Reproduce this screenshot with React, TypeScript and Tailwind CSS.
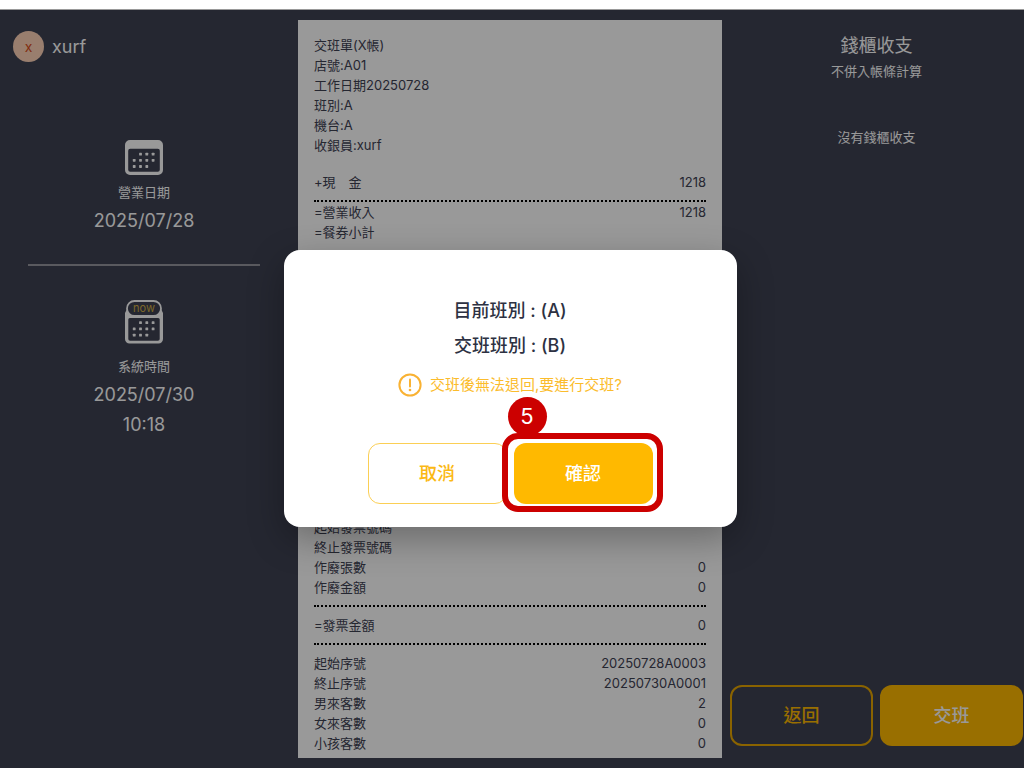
import type { ReactNode } from 'react';

interface ReceiptRow {
  label: string;
  value?: string;
}

const headerLines = [
  '交班單(X帳)',
  '店號:A01',
  '工作日期20250728',
  '班別:A',
  '機台:A',
  '收銀員:xurf'
];

const incomeRows: ReceiptRow[] = [
  { label: '=營業收入', value: '1218' },
  { label: '=餐券小計' }
];

const invoiceRows: ReceiptRow[] = [
  { label: '起始發票號碼' },
  { label: '終止發票號碼' },
  { label: '作廢張數', value: '0' },
  { label: '作廢金額', value: '0' }
];

const guestRows: ReceiptRow[] = [
  { label: '起始序號', value: '20250728A0003' },
  { label: '終止序號', value: '20250730A0001' },
  { label: '男來客數', value: '2' },
  { label: '女來客數', value: '0' },
  { label: '小孩客數', value: '0' }
];

function Rows({ rows }: { rows: ReceiptRow[] }) {
  return (
    <dl>
      {rows.map((row) => (
        <div key={row.label} className="flex justify-between whitespace-pre">
          <dt>{row.label}</dt>
          <dd>{row.value}</dd>
        </div>
      ))}
    </dl>
  );
}

function DottedLine({ className = '' }: { className?: string }) {
  return <hr className={`border-t-2 border-dotted border-black ${className}`} />;
}

function CalendarDots({ top }: { top: number }) {
  const dots = [
    [1, 0], [2, 0], [3, 0],
    [0, 1], [1, 1], [2, 1], [3, 1],
    [0, 2], [1, 2], [2, 2]
  ];
  return (
    <>
      {dots.map(([col, row]) => (
        <rect
          key={`${col}-${row}`}
          x={7.8 + col * 6.3}
          y={top + row * 6.2}
          width="2.8"
          height="2.8"
          rx="0.6"
          fill="white"
        />
      ))}
    </>
  );
}

function CalendarIcon() {
  return (
    <svg width="38" height="35" viewBox="0 0 38 35" aria-hidden="true">
      <path
        fill="white"
        fillRule="evenodd"
        d="M5 0H33a5 5 0 0 1 5 5V30a5 5 0 0 1-5 5H5a5 5 0 0 1-5-5V5a5 5 0 0 1 5-5ZM5.2 8.8a2 2 0 0 0-2 2V29.8a2 2 0 0 0 2 2H32.8a2 2 0 0 0 2-2V10.8a2 2 0 0 0-2-2Z"
      />
      <CalendarDots top={12.7} />
    </svg>
  );
}

function NowIcon() {
  return (
    <svg width="38" height="44" viewBox="0 0 38 44" aria-hidden="true">
      <path
        fill="white"
        fillRule="evenodd"
        d="M2 9H36L38 13V39a4.5 4.5 0 0 1-4.5 4.5H4.5a4.5 4.5 0 0 1-4.5-4.5V13ZM4.8 18a1.5 1.5 0 0 0-1.5 1.5V39a1.8 1.8 0 0 0 1.8 1.8H32.9a1.8 1.8 0 0 0 1.8-1.8V19.5a1.5 1.5 0 0 0-1.5-1.5Z"
      />
      <rect x="2" y="1" width="34" height="15" rx="7.5" fill="#3e4153" stroke="white" strokeWidth="1.8" />
      <text x="19" y="12" textAnchor="middle" fill="#cfae45" className="text-[11px]">
        now
      </text>
      <CalendarDots top={21.3} />
    </svg>
  );
}

interface InfoBlockProps {
  icon: ReactNode;
  label: string;
  children: ReactNode;
  className?: string;
}

function InfoBlock({ icon, label, children, className = '' }: InfoBlockProps) {
  return (
    <div className={`flex flex-col items-center ${className}`}>
      {icon}
      <div className="text-center">
        <p className="mb-1 text-[13px] leading-5">{label}</p>
        <div className="text-lg leading-[30px]">{children}</div>
      </div>
    </div>
  );
}

function ConfirmDialog() {
  return (
    <div
      role="dialog"
      aria-modal="true"
      aria-labelledby="shift-title"
      className="flex w-[453px] flex-col items-center rounded-2xl bg-white pt-[43px] pb-[23px] shadow-[0_12px_36px_rgba(0,0,0,0.3)]"
    >
      <h2 id="shift-title" className="text-center text-lg leading-[35px] font-medium text-[#2d3142]">
        目前班別 : (A)
        <br />
        交班班別 : (B)
      </h2>
      <p className="mt-2.5 flex items-center gap-2 text-[15px] leading-6 text-[#fbbc2c]">
        <svg width="24" height="24" viewBox="0 0 24 24" fill="none" aria-hidden="true">
          <circle cx="12" cy="12" r="10.6" stroke="#f9b233" strokeWidth="2" />
          <path d="M12 6.5V13.5" stroke="#f9b233" strokeWidth="2" strokeLinecap="round" />
          <circle cx="12" cy="17" r="1.3" fill="#f9b233" />
        </svg>
        交班後無法退回,要進行交班?
      </p>
      <div className="mt-[46px] flex gap-[7px] text-lg font-medium">
        <button type="button" className="h-[61px] w-[139px] rounded-xl border border-[#fbcf55] text-[#fbb914]">
          取消
        </button>
        <div className="relative">
          <button type="button" className="h-[61px] w-[139px] rounded-xl bg-[#ffb900] text-white">
            確認
          </button>
          {/* step marker around the confirm button */}
          <div className="pointer-events-none absolute -top-2.5 -right-2.5 -bottom-2 -left-3 rounded-2xl border-6 border-[#cc0000]" />
          <span className="absolute -top-[46px] -left-1.5 flex size-[39px] items-center justify-center rounded-full bg-[#cc0000] text-[22px] font-normal text-white">
            5
          </span>
        </div>
      </div>
    </div>
  );
}

export default function App() {
  return (
    <div className="flex h-screen flex-col bg-white font-['Inter','Noto_Sans_CJK_TC',sans-serif]">
      <div className="h-[9px] shrink-0" />
      <div className="relative min-h-0 flex-1">
        <main className="grid h-full grid-cols-[298fr_424fr_302fr] border-t border-white bg-[#3e4153] text-white">
          <aside className="flex flex-col pt-[21px]">
            <div className="flex items-center gap-2 pl-[13px] text-lg">
              <span className="flex size-[31px] items-center justify-center rounded-full bg-[#ffd3b8] text-sm text-[#d9501e]">
                x
              </span>
              <span>xurf</span>
            </div>
            <div className="mt-[78px] pr-[38px] pl-7">
              <InfoBlock icon={<CalendarIcon />} label="營業日期" className="gap-[7px]">
                <p>2025/07/28</p>
              </InfoBlock>
              <hr className="mt-7 mb-[34px] border-t-2 border-[#96979f]" />
              <InfoBlock icon={<NowIcon />} label="系統時間" className="gap-3">
                <p>2025/07/30</p>
                <p>10:18</p>
              </InfoBlock>
            </div>
          </aside>

          <section className="my-2.5 flex flex-col justify-between overflow-hidden bg-white px-4 pt-[15px] pb-[5px] text-[13px] leading-5 text-[#3e4153]">
            <div>
              {headerLines.map((line) => (
                <p key={line}>{line}</p>
              ))}
              <div className="mt-[17px]">
                <Rows rows={[{ label: '+現　金', value: '1218' }]} />
              </div>
              <DottedLine className="mt-2" />
              <Rows rows={incomeRows} />
            </div>
            <div>
              <Rows rows={invoiceRows} />
              <DottedLine className="my-2" />
              <Rows rows={[{ label: '=發票金額', value: '0' }]} />
              <DottedLine className="my-2" />
              <Rows rows={guestRows} />
            </div>
          </section>

          <aside className="flex flex-col pt-[21px] pr-px pb-[22px] pl-2 text-center">
            <h1 className="text-lg leading-[30px]">錢櫃收支</h1>
            <p className="text-[13px] leading-5">不併入帳條計算</p>
            <p className="mt-[46px] text-[13px] leading-5">沒有錢櫃收支</p>
            <div className="mt-auto grid grid-cols-2 gap-[7px] text-lg font-medium">
              <button type="button" className="h-[61px] rounded-xl border-2 border-[#e6a600] text-[#ffb900]">
                返回
              </button>
              <button type="button" className="h-[61px] rounded-xl bg-[#ffb900] text-white">
                交班
              </button>
            </div>
          </aside>
        </main>

        <div className="absolute inset-0 flex items-center justify-center bg-black/40 pr-1">
          <ConfirmDialog />
        </div>
      </div>
    </div>
  );
}
